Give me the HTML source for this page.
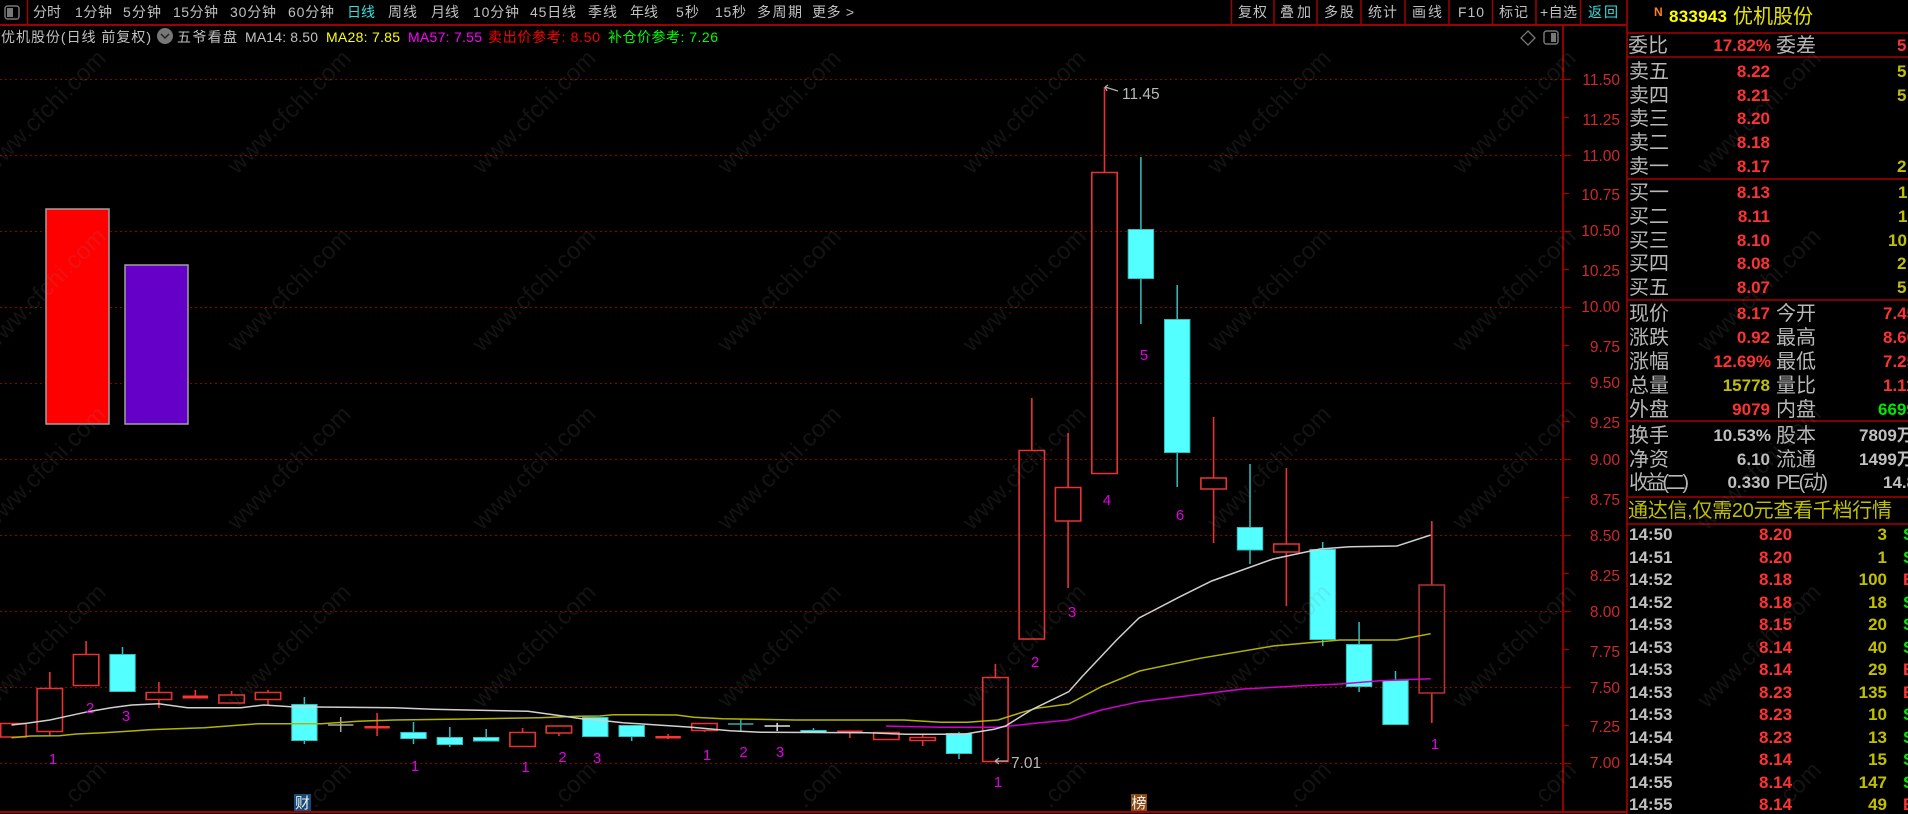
<!DOCTYPE html>
<html><head><meta charset="utf-8"><style>
html,body{margin:0;padding:0;background:#000;width:1908px;height:814px;overflow:hidden}
svg{display:block}
text{font-family:"Liberation Sans","Noto Sans CJK SC",sans-serif}
.t{font-size:14px;fill:#c0c0c0}
.l{font-size:20px;fill:#b8b8b8}
.n{font-size:17px;font-weight:bold;fill:#ff3232}
.g{fill:#c0c0c0}.y{fill:#c0c000}.e{fill:#00e600}.r{fill:#ff3232}
.a{font-size:15.5px;fill:#cc2a2a;text-anchor:end}
.m{font-size:15px;fill:#e000e0;text-anchor:middle}
.w{font-size:24px;fill:rgba(128,128,128,.15)}
.e2{text-anchor:end}
</style></head><body>
<svg width="1908" height="814" viewBox="0 0 1908 814" xmlns="http://www.w3.org/2000/svg">
<rect width="1908" height="814" fill="#000"/>

<!-- grid -->
<g stroke="#8c0000" stroke-width="1" stroke-dasharray="2 3" fill="none">
<path d="M0 79.5H1563M0 155.5H1563M0 231.5H1563M0 307.5H1563M0 383.5H1563M0 459.5H1563M0 535.5H1563M0 611.5H1563M0 687.5H1563M0 763.5H1563"/>
</g>

<!-- boxes -->
<rect x="46" y="209" width="63" height="215" fill="#ff0000" stroke="#a0a0a0" stroke-width="1.5"/>
<rect x="125" y="265" width="63" height="159" fill="#6400c8" stroke="#a0a0a0" stroke-width="1.5"/>

<!-- cyan wicks -->
<path fill="none" stroke="#33bfbf" stroke-width="1.5" d="M122.5 647V654M304.4 697V704M304.4 740V744M413.5 722V744M449.8 727V747M486.2 729V737M631.7 736V741M813.5 728V731M959 732V733M959 753V759M1140.9 157V229M1140.9 278V324M1177.2 285V319M1177.2 452V487M1250 464V527M1250 550V564M1322.7 542V549M1322.7 639V646M1359.1 622V645M1359.1 687V692M1395.5 671V680"/>
<!-- cyan bodies -->
<g fill="#54ffff" stroke="#33bfbf" stroke-width="1">
<rect x="109.8" y="654.5" width="25.4" height="37"/>
<rect x="291.7" y="704.5" width="25.4" height="36"/>
<rect x="400.8" y="732.5" width="25.4" height="6"/>
<rect x="437.1" y="737.5" width="25.4" height="7"/>
<rect x="473.5" y="737.5" width="25.4" height="3.5"/>
<rect x="582.6" y="717.5" width="25.4" height="19"/>
<rect x="619" y="725.5" width="25.4" height="11"/>
<rect x="800.8" y="730.5" width="25.4" height="2"/>
<rect x="946.3" y="733.5" width="25.4" height="20"/>
<rect x="1128.2" y="229.5" width="25.4" height="49"/>
<rect x="1164.5" y="319.5" width="25.4" height="133"/>
<rect x="1237.3" y="527.5" width="25.4" height="22.5"/>
<rect x="1310" y="549.5" width="25.4" height="90"/>
<rect x="1346.4" y="644.5" width="25.4" height="42"/>
<rect x="1382.8" y="680.5" width="25.4" height="44"/>
</g>
<!-- red hollow -->
<path fill="none" stroke="#e83232" stroke-width="1.6" d="M.7 723.5h25.4v13.5H.7zM49.8 672V688.5M49.8 731.5V736M37.1 688.5h25.4v43H37.1zM86.1 641V654.5M73.4 654.5h25.4v31H73.4zM158.9 682V692.5M158.9 699.5V708M146.2 692.5h25.4v7h-25.4zM231.6 691V695M218.9 695h25.4v8h-25.4zM268 690V692.5M268 699.5V705M255.3 692.5h25.4v7h-25.4zM522.6 728V732.5M509.9 732.5h25.4v14h-25.4zM558.9 733V736M546.2 726h25.4v7h-25.4zM704.4 730.5V732M691.7 723.5h25.4v7h-25.4zM873.6 732.5h25.4v7h-25.4zM922.7 734V737.5M922.7 740.5V746M910 737.5h25.4v3H910zM995.4 664V677.5M982.7 677.5h25.4v84h-25.4zM1031.8 398V450.5M1019.1 450.5h25.4V639h-25.4zM1068.1 433V487.5M1068.1 521V588M1055.4 487.5h25.4V521h-25.4zM1104.5 87V172.5M1091.8 172.5h25.4v301h-25.4zM1213.6 417V478M1213.6 489V543M1200.9 478h25.4v11h-25.4zM1286.4 468V544M1286.4 552V606M1273.7 544h25.4v8h-25.4zM1431.8 521V585M1431.8 693V723"/>
<path fill="none" stroke="#b83030" stroke-width="1.6" d="M1419.1 585h25.4v108h-25.4z"/>
<!-- red flat -->
<g fill="#ff3232">
<rect x="182.6" y="695.5" width="25.4" height="3"/><rect x="364.4" y="726" width="25.4" height="2.5"/><rect x="655.4" y="736" width="25.4" height="2.5"/><rect x="837.2" y="730.5" width="25.4" height="1.5"/>
</g>
<path fill="none" stroke="#ff3232" stroke-width="1.5" d="M195.3 690V696M377.1 713V736M668.1 734V739M849.9 731V738"/>
<!-- crosses -->
<path fill="none" stroke="#a8a8a8" stroke-width="1.5" d="M328 725h25.4M340.7 717V732"/>
<path fill="none" stroke="#33a8a8" stroke-width="1.5" d="M728 724h25.4M740.8 719V731"/>
<path fill="none" stroke="#e0e0e0" stroke-width="1.5" d="M764.5 726h25.4M777.2 723V731"/>

<!-- MA lines -->
<polyline fill="none" stroke="#b4b400" stroke-width="1.5" points="11.5,737.7 30.6,736 59.3,735.7 76.5,734 103.3,732.7 132,731 149,729.7 176,728.7 204.7,727.7 241,725 258.3,723.7 321.5,723.7 357.8,721.3 394,720 467,719 539.6,717.7 578,716.3 600,716 613.4,714.7 676.5,715 693.8,717.3 722.5,718.7 795,720 904,720 940.6,722.3 967.4,722.3 998,720 1021,712.7 1036.3,708.3 1068.8,704 1101.3,686.7 1139.6,671 1200,658.3 1273,646 1340,640 1397,640 1430.7,633.7"/>
<polyline fill="none" stroke="#d000d0" stroke-width="1.5" points="886,726 940.6,727.3 998,727.3 1040,722.7 1068.8,720 1101.3,710 1139.6,701.7 1180,696.7 1243,689 1297,686 1340,684 1380,680.7 1430.7,678.7"/>
<polyline fill="none" stroke="#d0d0d0" stroke-width="1.5" points="11.5,725 26.8,723.3 49.8,720 65,716.7 88,711.7 111,707.7 132,705 158.8,703.7 187.5,707.7 241,707.7 264,705 291,706.7 394,707.7 432.5,709.3 467,710 528,711.3 562.6,716 581.7,718.7 600,720.3 623,722.7 657.4,725 691.8,727.3 730,730.7 760.7,732.3 868,732.7 906,734.3 963.6,734.3 994,729.3 1005.6,726 1032.5,709.3 1068.8,691.7 1082,676.7 1116.6,640 1139,618 1180,596.7 1211.7,581 1273,559 1320,549 1350,546.7 1397,546 1430.7,535"/>

<!-- magenta numbers -->
<g class="m">
<text class="m" x="53" y="764">1</text><text class="m" x="90" y="713">2</text><text class="m" x="126" y="721">3</text><text class="m" x="415" y="771">1</text><text class="m" x="525.5" y="772">1</text><text class="m" x="562.6" y="762">2</text><text class="m" x="597" y="763">3</text><text class="m" x="707" y="760">1</text><text class="m" x="743.5" y="757">2</text><text class="m" x="780" y="757">3</text><text class="m" x="998" y="787">1</text><text class="m" x="1035" y="667">2</text><text class="m" x="1072" y="617">3</text><text class="m" x="1107" y="505">4</text><text class="m" x="1144" y="360">5</text><text class="m" x="1180" y="520">6</text><text class="m" x="1435" y="749">1</text>
</g>

<!-- annotations -->
<path fill="none" stroke="#b0b0b0" stroke-width="1.2" d="M1118 91L1105 87M1105 87l3-2M1105 87l2 4"/>
<text x="1122" y="99" font-size="15.5" fill="#b8b8b8">11.45</text>
<path fill="none" stroke="#b0b0b0" stroke-width="1.2" d="M1008 761H995M995 761l4-3M995 761l4 3"/>
<text x="1011" y="768" font-size="15.5" fill="#b8b8b8">7.01</text>

<!-- markers -->
<rect x="294" y="794" width="17" height="17" fill="#174a78"/>
<text x="295" y="808" font-size="15" fill="#f0f0f0">财</text>
<rect x="1131" y="794" width="16" height="17" fill="#8a4a14"/>
<text x="1131.5" y="808" font-size="15" fill="#f0f0f0">榜</text>

<!-- axis -->
<path fill="none" stroke="#a00000" stroke-width="1.8" d="M1563 25V812"/>
<path fill="none" stroke="#a00000" stroke-width="1.2" d="M1563 79.5h8M1563 117.5h6M1563 155.5h8M1563 193.5h6M1563 231.5h8M1563 269.5h6M1563 307.5h8M1563 345.5h6M1563 383.5h8M1563 421.5h6M1563 459.5h8M1563 497.5h6M1563 535.5h8M1563 573.5h6M1563 611.5h8M1563 649.5h6M1563 687.5h8M1563 725.5h6M1563 763.5h8"/>
<g>
<text class="a" x="1620" y="85">11.50</text><text class="a" x="1620" y="125">11.25</text><text class="a" x="1620" y="161">11.00</text><text class="a" x="1620" y="200">10.75</text><text class="a" x="1620" y="236">10.50</text><text class="a" x="1620" y="276">10.25</text><text class="a" x="1620" y="312">10.00</text><text class="a" x="1620" y="352">9.75</text><text class="a" x="1620" y="388">9.50</text><text class="a" x="1620" y="428">9.25</text><text class="a" x="1620" y="465">9.00</text><text class="a" x="1620" y="505">8.75</text><text class="a" x="1620" y="541">8.50</text><text class="a" x="1620" y="581">8.25</text><text class="a" x="1620" y="617">8.00</text><text class="a" x="1620" y="657">7.75</text><text class="a" x="1620" y="693">7.50</text><text class="a" x="1620" y="732">7.25</text><text class="a" x="1620" y="768">7.00</text>
</g>

<!-- top bar -->
<path fill="none" stroke="#a00000" stroke-width="2" d="M0 25H1627M0 812H1627"/>
<path fill="none" stroke="#a00000" stroke-width="1.5" d="M27.5 0V24M1231.5 0V24M1274 0V24M1317 0V24M1361 0V24M1405 0V24M1449 0V24M1492.5 0V24M1536 0V24M1580.5 0V24"/>
<rect x="5" y="6" width="14" height="13" rx="2.5" fill="none" stroke="#777" stroke-width="1.5"/><rect x="7" y="8" width="6" height="9" fill="#777"/>
<g class="t">
<text class="t" x="33" y="17" textLength="28">分时</text><text class="t" x="75" y="17" textLength="37">1分钟</text><text class="t" x="123" y="17" textLength="38">5分钟</text><text class="t" x="173" y="17" textLength="45">15分钟</text><text class="t" x="230" y="17" textLength="46">30分钟</text><text class="t" x="288" y="17" textLength="46">60分钟</text><text class="t" x="347" y="17" textLength="28" style="fill:#33e0e0">日线</text><text class="t" x="388" y="17" textLength="29">周线</text><text class="t" x="431" y="17" textLength="28">月线</text><text class="t" x="473" y="17" textLength="46">10分钟</text><text class="t" x="530" y="17" textLength="46">45日线</text><text class="t" x="588" y="17" textLength="29">季线</text><text class="t" x="630" y="17" textLength="28">年线</text><text class="t" x="676" y="17" textLength="23">5秒</text><text class="t" x="715" y="17" textLength="31">15秒</text><text class="t" x="757" y="17" textLength="45">多周期</text><text class="t" x="812" y="17" textLength="42">更多 &gt;</text>
<text class="t" x="1238" y="17" textLength="29">复权</text><text class="t" x="1280" y="17" textLength="31">叠加</text><text class="t" x="1324" y="17" textLength="30">多股</text><text class="t" x="1368" y="17" textLength="29">统计</text><text class="t" x="1412" y="17" textLength="30">画线</text><text class="t" x="1458" y="17" textLength="26">F10</text><text class="t" x="1499" y="17" textLength="29">标记</text><text class="t" x="1540" y="17" textLength="37">+自选</text><text class="t" x="1588" y="17" textLength="30" style="fill:#33e0e0">返回</text>
</g>

<!-- legend -->
<text class="t" x="1" y="42" textLength="150">优机股份(日线 前复权)</text>
<circle cx="165" cy="36" r="8" fill="#777"/><path d="M161 34l4 4 4-4" fill="none" stroke="#222" stroke-width="1.5"/>
<text class="t" x="177" y="42" textLength="60">五爷看盘</text>
<text class="t" x="245" y="42" textLength="73">MA14: 8.50</text>
<text class="t" x="326" y="42" textLength="74" style="fill:#ffff00">MA28: 7.85</text>
<text class="t" x="408" y="42" textLength="74" style="fill:#ff00ff">MA57: 7.55</text>
<text class="t" x="488" y="42" textLength="112" style="fill:#ff0000">卖出价参考: 8.50</text>
<text class="t" x="608" y="42" textLength="110" style="fill:#00ff00">补仓价参考: 7.26</text>
<path d="M1528 31l7 7-7 7-7-7z" fill="none" stroke="#777" stroke-width="1.3"/>
<rect x="1544" y="31" width="14" height="13" rx="2.5" fill="none" stroke="#777" stroke-width="1.5"/><rect x="1551" y="33" width="5" height="9" fill="#777"/>

<!-- right panel -->
<path fill="none" stroke="#a80000" stroke-width="1.6" d="M1627 0V814M1627 33H1908M1627 57H1908M1627 179H1908M1627 300H1908M1627 421H1908M1627 497H1908M1627 524H1908"/>
<text x="1654" y="16" font-size="12" font-weight="bold" fill="#ff8020">N</text>
<text x="1669" y="22" font-size="17" font-weight="bold" fill="#ffff00" textLength="58">833943</text>
<text x="1733" y="23" font-size="20" fill="#e6e600" textLength="80">优机股份</text>

<text class="l" x="1628" y="52">委比</text><text class="n e2" x="1771" y="51">17.82%</text><text class="l" x="1776" y="52">委差</text><text class="n" x="1897" y="51">5</text>

<g>
<text class="l" x="1629" y="78">卖五</text><text class="n e2" x="1770" y="77">8.22</text><text class="n y" x="1897" y="77">5</text>
<text class="l" x="1629" y="102">卖四</text><text class="n e2" x="1770" y="101">8.21</text><text class="n y" x="1897" y="101">5</text>
<text class="l" x="1629" y="125">卖三</text><text class="n e2" x="1770" y="124">8.20</text>
<text class="l" x="1629" y="149">卖二</text><text class="n e2" x="1770" y="148">8.18</text>
<text class="l" x="1629" y="173">卖一</text><text class="n e2" x="1770" y="172">8.17</text><text class="n y" x="1897" y="172">2</text>
<text class="l" x="1629" y="199">买一</text><text class="n e2" x="1770" y="198">8.13</text><text class="n y" x="1898" y="198">1</text>
<text class="l" x="1629" y="223">买二</text><text class="n e2" x="1770" y="222">8.11</text><text class="n y" x="1898" y="222">1</text>
<text class="l" x="1629" y="247">买三</text><text class="n e2" x="1770" y="246">8.10</text><text class="n y" x="1888" y="246">10</text>
<text class="l" x="1629" y="270">买四</text><text class="n e2" x="1770" y="269">8.08</text><text class="n y" x="1897" y="269">2</text>
<text class="l" x="1629" y="294">买五</text><text class="n e2" x="1770" y="293">8.07</text><text class="n y" x="1897" y="293">5</text>

<text class="l" x="1629" y="320">现价</text><text class="n e2" x="1770" y="319">8.17</text><text class="l" x="1776" y="320">今开</text><text class="n" x="1883" y="319">7.45</text>
<text class="l" x="1629" y="344">涨跌</text><text class="n e2" x="1770" y="343">0.92</text><text class="l" x="1776" y="344">最高</text><text class="n" x="1883" y="343">8.60</text>
<text class="l" x="1629" y="368">涨幅</text><text class="n e2" x="1771" y="367">12.69%</text><text class="l" x="1776" y="368">最低</text><text class="n" x="1883" y="367">7.25</text>
<text class="l" x="1629" y="392">总量</text><text class="n e2 y" x="1770" y="391">15778</text><text class="l" x="1776" y="392">量比</text><text class="n" x="1883" y="391">1.11</text>
<text class="l" x="1629" y="416">外盘</text><text class="n e2" x="1770" y="415">9079</text><text class="l" x="1776" y="416">内盘</text><text class="n e" x="1878" y="415">6699</text>

<text class="l" x="1629" y="442">换手</text><text class="n e2 g" x="1771" y="441">10.53%</text><text class="l" x="1776" y="442">股本</text><text class="n g" x="1859" y="441">7809万</text>
<text class="l" x="1629" y="466">净资</text><text class="n e2 g" x="1770" y="465">6.10</text><text class="l" x="1776" y="466">流通</text><text class="n g" x="1859" y="465">1499万</text>
<text class="l" x="1629" y="489" textLength="60">收益(二)</text><text class="n e2 g" x="1770" y="488">0.330</text><text class="l" x="1776" y="489" textLength="52">PE(动)</text><text class="n g" x="1883" y="488">14.8</text>

<text class="l" x="1628" y="517" textLength="264" style="fill:#c0c000">通达信,仅需20元查看千档行情</text>
</g>

<!-- ticks -->
<g>
<text class="n g" x="1629" y="540">14:50</text><text class="n" x="1759" y="540">8.20</text><text class="n e2 y" x="1887" y="540">3</text><text class="n e" x="1903" y="540">S</text>
<text class="n g" x="1629" y="563">14:51</text><text class="n" x="1759" y="563">8.20</text><text class="n e2 y" x="1887" y="563">1</text><text class="n e" x="1903" y="563">S</text>
<text class="n g" x="1629" y="585">14:52</text><text class="n" x="1759" y="585">8.18</text><text class="n e2 y" x="1887" y="585">100</text><text class="n" x="1903" y="585">B</text>
<text class="n g" x="1629" y="608">14:52</text><text class="n" x="1759" y="608">8.18</text><text class="n e2 y" x="1887" y="608">18</text><text class="n e" x="1903" y="608">S</text>
<text class="n g" x="1629" y="630">14:53</text><text class="n" x="1759" y="630">8.15</text><text class="n e2 y" x="1887" y="630">20</text><text class="n e" x="1903" y="630">S</text>
<text class="n g" x="1629" y="653">14:53</text><text class="n" x="1759" y="653">8.14</text><text class="n e2 y" x="1887" y="653">40</text><text class="n e" x="1903" y="653">S</text>
<text class="n g" x="1629" y="675">14:53</text><text class="n" x="1759" y="675">8.14</text><text class="n e2 y" x="1887" y="675">29</text><text class="n" x="1903" y="675">B</text>
<text class="n g" x="1629" y="698">14:53</text><text class="n" x="1759" y="698">8.23</text><text class="n e2 y" x="1887" y="698">135</text><text class="n" x="1903" y="698">B</text>
<text class="n g" x="1629" y="720">14:53</text><text class="n" x="1759" y="720">8.23</text><text class="n e2 y" x="1887" y="720">10</text><text class="n e" x="1903" y="720">S</text>
<text class="n g" x="1629" y="743">14:54</text><text class="n" x="1759" y="743">8.23</text><text class="n e2 y" x="1887" y="743">13</text><text class="n e" x="1903" y="743">S</text>
<text class="n g" x="1629" y="765">14:54</text><text class="n" x="1759" y="765">8.14</text><text class="n e2 y" x="1887" y="765">15</text><text class="n e" x="1903" y="765">S</text>
<text class="n g" x="1629" y="788">14:55</text><text class="n" x="1759" y="788">8.14</text><text class="n e2 y" x="1887" y="788">147</text><text class="n e" x="1903" y="788">S</text>
<text class="n g" x="1629" y="810">14:55</text><text class="n" x="1759" y="810">8.14</text><text class="n e2 y" x="1887" y="810">49</text><text class="n" x="1903" y="810">B</text>
</g>

<!-- watermark -->
<g>
<text class="w" textLength="163" transform="translate(-8 175) rotate(-45)">www.cfchi.com</text>
<text class="w" textLength="163" transform="translate(237 175) rotate(-45)">www.cfchi.com</text>
<text class="w" textLength="163" transform="translate(482 175) rotate(-45)">www.cfchi.com</text>
<text class="w" textLength="163" transform="translate(727 175) rotate(-45)">www.cfchi.com</text>
<text class="w" textLength="163" transform="translate(972 175) rotate(-45)">www.cfchi.com</text>
<text class="w" textLength="163" transform="translate(1217 175) rotate(-45)">www.cfchi.com</text>
<text class="w" textLength="163" transform="translate(1462 175) rotate(-45)">www.cfchi.com</text>
<text class="w" textLength="163" transform="translate(1707 175) rotate(-45)">www.cfchi.com</text>
<text class="w" textLength="163" transform="translate(-8 353) rotate(-45)">www.cfchi.com</text>
<text class="w" textLength="163" transform="translate(237 353) rotate(-45)">www.cfchi.com</text>
<text class="w" textLength="163" transform="translate(482 353) rotate(-45)">www.cfchi.com</text>
<text class="w" textLength="163" transform="translate(727 353) rotate(-45)">www.cfchi.com</text>
<text class="w" textLength="163" transform="translate(972 353) rotate(-45)">www.cfchi.com</text>
<text class="w" textLength="163" transform="translate(1217 353) rotate(-45)">www.cfchi.com</text>
<text class="w" textLength="163" transform="translate(1462 353) rotate(-45)">www.cfchi.com</text>
<text class="w" textLength="163" transform="translate(1707 353) rotate(-45)">www.cfchi.com</text>
<text class="w" textLength="163" transform="translate(-8 531) rotate(-45)">www.cfchi.com</text>
<text class="w" textLength="163" transform="translate(237 531) rotate(-45)">www.cfchi.com</text>
<text class="w" textLength="163" transform="translate(482 531) rotate(-45)">www.cfchi.com</text>
<text class="w" textLength="163" transform="translate(727 531) rotate(-45)">www.cfchi.com</text>
<text class="w" textLength="163" transform="translate(972 531) rotate(-45)">www.cfchi.com</text>
<text class="w" textLength="163" transform="translate(1217 531) rotate(-45)">www.cfchi.com</text>
<text class="w" textLength="163" transform="translate(1462 531) rotate(-45)">www.cfchi.com</text>
<text class="w" textLength="163" transform="translate(1707 531) rotate(-45)">www.cfchi.com</text>
<text class="w" textLength="163" transform="translate(-8 709) rotate(-45)">www.cfchi.com</text>
<text class="w" textLength="163" transform="translate(237 709) rotate(-45)">www.cfchi.com</text>
<text class="w" textLength="163" transform="translate(482 709) rotate(-45)">www.cfchi.com</text>
<text class="w" textLength="163" transform="translate(727 709) rotate(-45)">www.cfchi.com</text>
<text class="w" textLength="163" transform="translate(972 709) rotate(-45)">www.cfchi.com</text>
<text class="w" textLength="163" transform="translate(1217 709) rotate(-45)">www.cfchi.com</text>
<text class="w" textLength="163" transform="translate(1462 709) rotate(-45)">www.cfchi.com</text>
<text class="w" textLength="163" transform="translate(1707 709) rotate(-45)">www.cfchi.com</text>
<text class="w" textLength="53" transform="translate(70 809) rotate(-45)">.com</text>
<text class="w" textLength="53" transform="translate(315 809) rotate(-45)">.com</text>
<text class="w" textLength="53" transform="translate(560 809) rotate(-45)">.com</text>
<text class="w" textLength="53" transform="translate(805 809) rotate(-45)">.com</text>
<text class="w" textLength="53" transform="translate(1050 809) rotate(-45)">.com</text>
<text class="w" textLength="53" transform="translate(1295 809) rotate(-45)">.com</text>
<text class="w" textLength="53" transform="translate(1540 809) rotate(-45)">.com</text>
<text class="w" textLength="53" transform="translate(1785 809) rotate(-45)">.com</text>
</g>
</svg>
</body></html>
